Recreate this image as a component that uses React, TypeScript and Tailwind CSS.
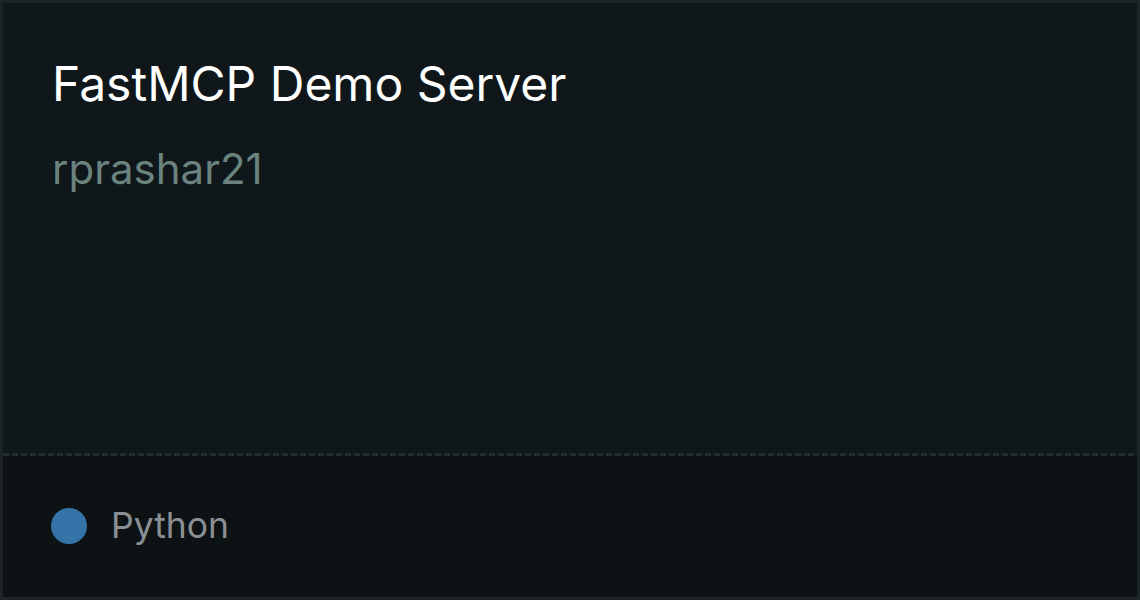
export default function App() {
  return (
    <div
      className="w-[1140px] h-[600px] flex flex-col border-[3px] border-[#1d2427] bg-[#10171a]"
      style={{ fontFamily: "Inter, 'Noto Sans', sans-serif" }}
    >
      <div className="flex-1 px-[49px] pt-[49px]">
        <h1 className="text-[48px] leading-[64px] text-white font-normal">
          FastMCP Demo Server
        </h1>
        <p className="mt-[29px] text-[42px] leading-[48px] text-[#6a837f]">
          rprashar21
        </p>
      </div>
      <div className="h-[3px] bg-[repeating-linear-gradient(90deg,#242b2f_0_6px,transparent_6px_9px)]" />
      <div className="h-[141px] bg-[#0d1215] flex items-center gap-[24px] px-[48px] pb-[2px]">
        <span className="w-[36px] h-[36px] rounded-full bg-[#3574a8]" />
        <span className="text-[35.5px] text-[#8a8f93]">Python</span>
      </div>
    </div>
  );
}
